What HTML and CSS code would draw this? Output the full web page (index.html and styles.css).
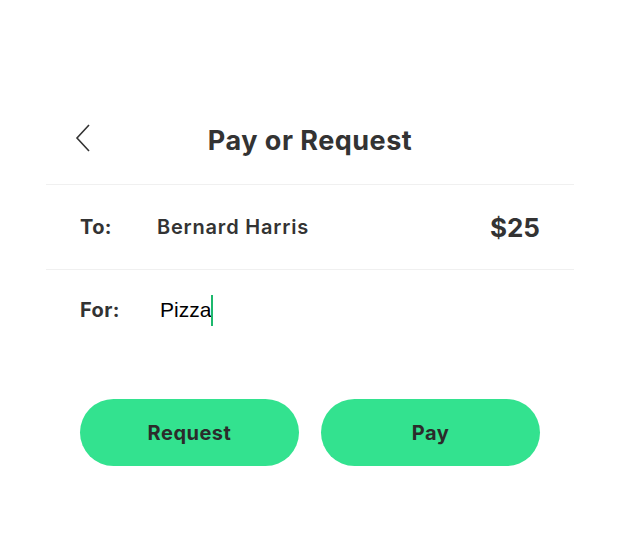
FILE: index.html
```html
<!DOCTYPE html>
<html>
<head>
<meta charset="utf-8">
<link rel="stylesheet" href="styles.css">
</head>
<body>
<div class="screen">
  <header class="header">
    <svg class="back" width="16" height="28" viewBox="0 0 16 28"><path d="M14 1 L2 14 L14 27" fill="none" stroke="#333" stroke-width="1.6"/></svg>
    <h1 class="title">Pay or Request</h1>
  </header>
  <div class="row row-to">
    <span class="label">To:</span>
    <span class="name">Bernard Harris</span>
    <span class="amount">$25</span>
  </div>
  <div class="row row-for">
    <span class="label">For:</span>
    <span class="memo">Pizza</span><span class="caret"></span>
  </div>
  <div class="actions">
    <button class="btn">Request</button>
    <button class="btn">Pay</button>
  </div>
</div>
</body>
</html>
```
FILE: styles.css
```css
html, body { margin: 0; padding: 0; background: #fff; }
body { font-family: "Inter", "Noto Sans", sans-serif; color: #333; }
.screen { width: 528px; margin-left: 46px; padding-top: 100px; }
.header { position: relative; height: 84px; border-bottom: 1px solid #f0f0f0; display: flex; align-items: center; justify-content: center; }
.back { position: absolute; left: 29px; top: 24px; }
.title { margin: 0 0 4px; font-size: 27px; font-weight: 700; color: #333; letter-spacing: 0.5px; }
.row { display: flex; align-items: center; padding: 0 34px; }
.row-to { height: 84px; border-bottom: 1px solid #f0f0f0; }
.row-for { height: 80px; }
.label { width: 77px; font-size: 20px; font-weight: 700; color: #333; letter-spacing: 0.4px; }
.name { flex: 1; font-size: 20px; font-weight: 600; color: #333; letter-spacing: 0.8px; }
.amount { font-size: 26px; font-weight: 700; color: #333; }
.memo { margin-left: 3px; font-family: "Liberation Sans", Arial, sans-serif; font-size: 21px; color: #000; }
.caret { width: 2px; height: 31px; background: #1db86d; margin-left: 0; }
.actions { display: flex; gap: 22px; padding: 49px 34px 0; }
.btn { flex: 1; height: 67px; border: none; border-radius: 34px; background: #33e28f; font-family: "Inter", "Noto Sans", sans-serif; font-size: 20px; font-weight: 700; color: #2b2b2b; letter-spacing: 0.5px; }
```
